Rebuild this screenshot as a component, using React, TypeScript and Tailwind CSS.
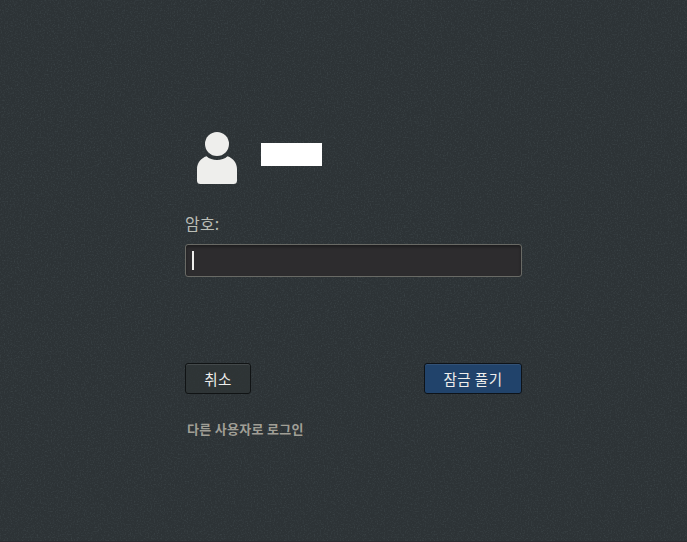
function NoiseTexture() {
  return (
    <svg className="pointer-events-none absolute inset-0 h-full w-full" aria-hidden="true">
      <filter id="noise" x="0" y="0" width="100%" height="100%" colorInterpolationFilters="sRGB">
        <feTurbulence type="fractalNoise" baseFrequency="0.7" numOctaves="2" seed="4" />
        <feColorMatrix values="0 0 0 0 0.48  0 0 0 0 0.56  0 0 0 0 0.58  1.2 0 0 0 -0.56" />
      </filter>
      <rect width="100%" height="100%" filter="url(#noise)" opacity="0.32" />
    </svg>
  );
}

function Avatar() {
  return (
    <svg className="h-[52px] w-10" viewBox="0 0 40 52" fill="#eeeeec" aria-hidden="true">
      <circle cx="20" cy="12" r="12" />
      <path d="M9.5 24.2C12.2 26.8 16 28 20 28s7.800-1.200 10.500-3.800C36 26 40 31 40 37v11.500a3.500 3.500 0 0 1-3.500 3.500h-33A3.500 3.500 0 0 1 0 48.500V37c0-6 4-11 9.500-12.800Z" />
    </svg>
  );
}

export default function App() {
  return (
    <main className="relative h-[542px] w-[687px] overflow-hidden border-b border-[#2d2b31] bg-[#2d3336] font-['Noto_Sans_CJK_KR',sans-serif]">
      <NoiseTexture />
      <form className="relative ml-[185px] flex w-[337px] flex-col pt-[132px]" onSubmit={(e) => e.preventDefault()}>
        <div className="flex h-[52px] gap-6 pl-3">
          <Avatar />
          <div className="mt-[11px] h-[23px] w-[61px] bg-white" />
        </div>
        <label className="mt-[27px] h-6 text-[16px] leading-6 tracking-[0.2px] text-[#babdb6]">암호:</label>
        <div className="mt-[9px] flex h-[33px] items-center rounded-[3px] border border-[#696a65] bg-[#2d2c2e] pl-[6px] shadow-[inset_0_2px_3px_rgba(0,0,0,0.35)]">
          <span className="h-[19px] w-[2px] bg-[#eeeeec]" />
        </div>
        <div className="mt-[86px] flex justify-between">
          <button className="h-[31px] w-[66px] rounded-[3px] border border-[#101314] bg-[#2e3436]/80 text-[14.500px] leading-[29px] tracking-[0.500px] text-[#eeeeec] shadow-[inset_0_1px_0_rgba(255,255,255,0.1)]">취소</button>
          <button className="h-[31px] w-[98px] rounded-[3px] border border-[#0e1318] bg-[#21436b] text-[14.500px] leading-[29px] tracking-[0.500px] text-[#eeeeec] shadow-[inset_0_1px_0_rgba(255,255,255,0.08)]">잠금 풀기</button>
        </div>
        <a className="mt-[25px] pl-[2px] text-[13px] leading-5 font-bold tracking-[0.300px] text-[#a09f96]">다른 사용자로 로그인</a>
      </form>
    </main>
  );
}
